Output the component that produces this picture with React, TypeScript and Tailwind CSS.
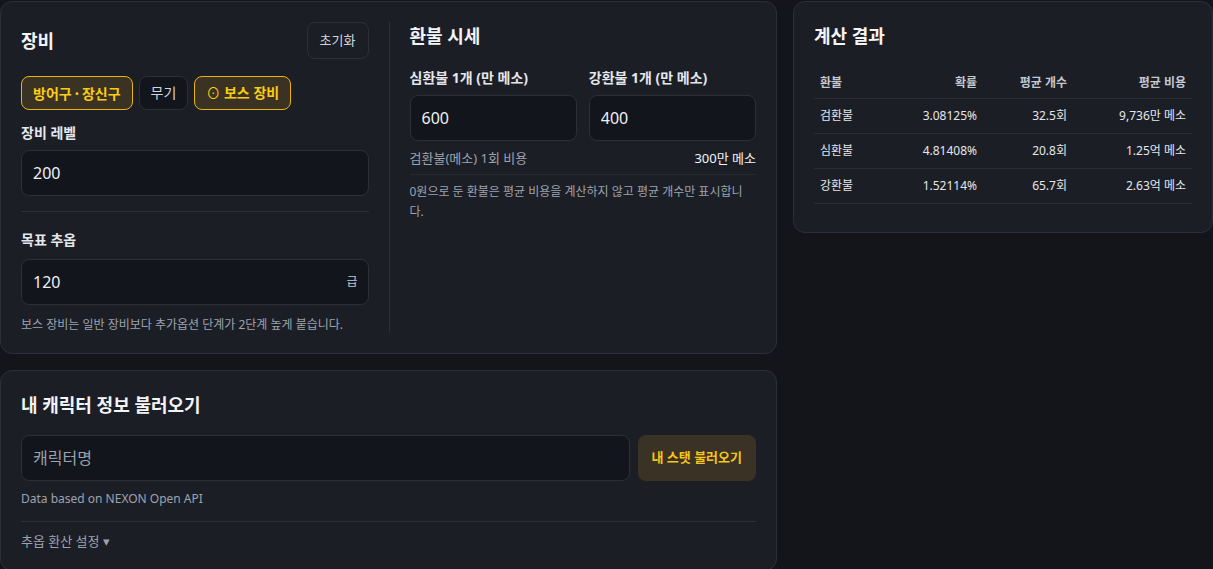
import { useState } from 'react';

type Row = {
  name: string;
  rate: string;
  count: string;
  cost: string;
};

const rows: Row[] = [
  { name: '검환불', rate: '3.08125%', count: '32.5회', cost: '9,736만 메소' },
  { name: '심환불', rate: '4.81408%', count: '20.8회', cost: '1.25억 메소' },
  { name: '강환불', rate: '1.52114%', count: '65.7회', cost: '2.63억 메소' },
];

const card = 'rounded-xl border border-[#2c2f3a] bg-[#1c1e26]';
const field =
  'h-[46px] w-full rounded-lg border border-[#2c2f3a] bg-[#13151c] px-[11px] text-base text-[#eef0f4] outline-none';

function Chip({ children, active, onClick }: { children: React.ReactNode; active: boolean; onClick: () => void }) {
  return (
    <button
      onClick={onClick}
      className={
        active
          ? 'h-[34px] rounded-lg border border-[#eab308] bg-[#3a3324] px-[11px] text-sm font-bold text-[#facc15]'
          : 'h-[34px] rounded-lg border border-[#2c2f3a] bg-[#13151c] px-[11px] text-sm text-[#d1d5db]'
      }
    >
      {children}
    </button>
  );
}

export default function App() {
  const [armor, setArmor] = useState(true);
  const [boss, setBoss] = useState(true);
  const [level, setLevel] = useState('200');
  const [target, setTarget] = useState('120');
  const [black, setBlack] = useState('600');
  const [red, setRed] = useState('400');
  const [name, setName] = useState('');

  return (
    <div className="min-h-screen bg-[#14151a] pt-px font-['Noto_Sans','Noto_Sans_CJK_KR',sans-serif] text-[#e5e7eb]">
      <div className="grid grid-cols-[minmax(0,1fr)_420px] items-start gap-4">
        <div className="flex flex-col gap-4">
          {/* equipment + cube prices */}
          <section className={`${card} grid grid-cols-2 p-5`}>
            <div className="pr-5">
              <div className="flex items-center justify-between">
                <h2 className="text-lg font-bold text-[#f3f4f6]">장비</h2>
                <button className="h-[37px] rounded-lg border border-[#2c2f3a] px-3 text-[13px] text-[#d1d5db]">
                  초기화
                </button>
              </div>
              <div className="mt-[17px] flex gap-1.5">
                <Chip active={armor} onClick={() => setArmor(true)}>
                  방어구<span className="px-px font-['Noto_Sans_CJK_KR']">·</span>장신구
                </Chip>
                <Chip active={!armor} onClick={() => setArmor(false)}>
                  무기
                </Chip>
                <Chip active={boss} onClick={() => setBoss(!boss)}>
                  <span className="font-normal">⊙</span> 보스 장비
                </Chip>
              </div>
              <label className="mt-[13px] block text-sm font-bold text-[#e5e7eb]">장비 레벨</label>
              <input className={`${field} mt-[7px]`} value={level} onChange={(e) => setLevel(e.target.value)} />
              <div className="mt-[15px] h-px bg-[#2c2f3a]" />
              <label className="mt-[18px] block text-sm font-bold text-[#e5e7eb]">목표 추옵</label>
              <div className="relative mt-[9px]">
                <input className={field} value={target} onChange={(e) => setTarget(e.target.value)} />
                <span className="absolute right-[11px] top-1/2 -translate-y-1/2 text-xs text-[#c4c8d0]">급</span>
              </div>
              <p className="mt-3 text-xs text-[#9ca3af]">보스 장비는 일반 장비보다 추가옵션 단계가 2단계 높게 붙습니다.</p>
            </div>

            <div className="border-l border-[#2c2f3a] pl-5">
              <h2 className="text-lg font-bold text-[#f3f4f6]">환불 시세</h2>
              <div className="mt-[18px] grid grid-cols-2 gap-3">
                <div>
                  <label className="block text-sm font-bold text-[#e5e7eb]">심환불 1개 (만 메소)</label>
                  <input className={`${field} mt-[7px]`} value={black} onChange={(e) => setBlack(e.target.value)} />
                </div>
                <div>
                  <label className="block text-sm font-bold text-[#e5e7eb]">강환불 1개 (만 메소)</label>
                  <input className={`${field} mt-[7px]`} value={red} onChange={(e) => setRed(e.target.value)} />
                </div>
              </div>
              <div className="mt-[7px] flex items-center justify-between border-b border-[#262933] pb-1.5 text-[13px] leading-5">
                <span className="text-[#9ca3af]">검환불(메소) 1회 비용</span>
                <span className="text-[#f3f4f6]">300만 메소</span>
              </div>
              <p className="mt-[7px] text-xs leading-5 text-[#9ca3af]">
                0원으로 둔 환불은 평균 비용을 계산하지 않고 평균 개수만 표시합니다.
              </p>
            </div>
          </section>

          {/* character lookup */}
          <section className={`${card} px-5 pt-5 pb-[18px]`}>
            <h2 className="text-lg font-bold text-[#f3f4f6]">내 캐릭터 정보 불러오기</h2>
            <div className="mt-4 flex gap-2">
              <input
                className={`${field} placeholder:text-[#9ca3af]`}
                placeholder="캐릭터명"
                value={name}
                onChange={(e) => setName(e.target.value)}
              />
              <button className="h-[46px] shrink-0 rounded-lg bg-[#3a3224] px-[14px] text-[13px] font-bold text-[#f5c518]">
                내 스탯 불러오기
              </button>
            </div>
            <p className="mt-2.5 text-xs leading-4 text-[#9ca3af]">Data based on NEXON Open API</p>
            <div className="mt-3.5 h-px bg-[#2c2f3a]" />
            <button className="mt-[9px] text-[13px] leading-5 text-[#9ca3af]">추옵 환산 설정 ▾</button>
          </section>
        </div>

        {/* results */}
        <section className={`${card} px-5 pt-5 pb-7`}>
          <h2 className="text-lg font-bold text-[#f3f4f6]">계산 결과</h2>
          <table className="mt-[17px] w-full table-fixed text-xs">
            <colgroup>
              <col className="w-[80px]" />
              <col className="w-[89px]" />
              <col className="w-[90px]" />
              <col />
            </colgroup>
            <thead>
              <tr className="border-b border-[#2a2d37] text-[#c4c8d0]">
                <th className="px-1.5 pt-2 pb-[7px] text-left font-semibold">환불</th>
                <th className="px-1.5 pt-2 pb-[7px] text-right font-semibold">확률</th>
                <th className="px-1.5 pt-2 pb-[7px] text-right font-semibold">평균 개수</th>
                <th className="px-1.5 pt-2 pb-[7px] text-right font-semibold">평균 비용</th>
              </tr>
            </thead>
            <tbody>
              {rows.map((r) => (
                <tr key={r.name} className="border-b border-[#2a2d37] text-[#e5e7eb]">
                  <td className="px-1.5 py-[9px]">{r.name}</td>
                  <td className="px-1.5 py-[9px] text-right">{r.rate}</td>
                  <td className="px-1.5 py-[9px] text-right">{r.count}</td>
                  <td className="px-1.5 py-[9px] text-right">{r.cost}</td>
                </tr>
              ))}
            </tbody>
          </table>
        </section>
      </div>
    </div>
  );
}
